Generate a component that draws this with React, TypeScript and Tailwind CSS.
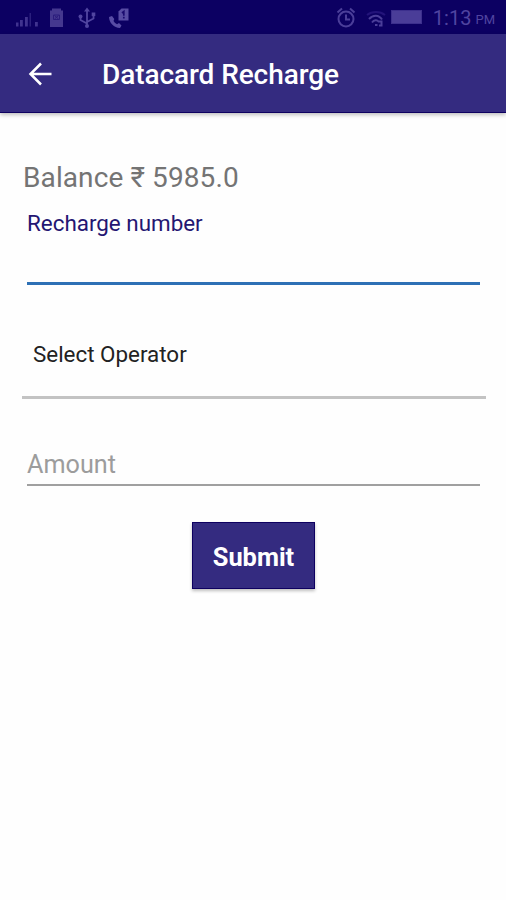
function SignalIcon() {
    return (
        <svg width="24" height="20" viewBox="0 0 24 20" fill="#40338f">
            <rect x="1" y="14.500" width="2.500" height="4" />
            <rect x="5" y="12" width="2.800" height="6.500" />
            <rect x="10" y="9" width="2.800" height="9.500" />
            <rect x="14.500" y="5" width="1.500" height="13.500" opacity="0.6" />
            <rect x="20" y="14" width="2.800" height="4.500" />
        </svg>
    );
}

function BatterySaverIcon() {
    return (
        <svg width="15" height="20" viewBox="0 0 15 20">
            <path d="M3 0.500H12V2.500H14V19H1V2.500H3Z" fill="#45388f" />
            <path d="M4.500 7h6v4.500h-6zM5.500 7.500l4 3.500M9.500 7.500l-4 3.500" fill="none" stroke="#2b1c7c" strokeWidth="1" />
        </svg>
    );
}

function UsbIcon() {
    return (
        <svg width="20" height="22" viewBox="0 0 20 22" fill="none" stroke="#5145a0" strokeWidth="1.800">
            <path d="M10 3V19M10 16.500L3.500 13V9.500M10 15L16.500 11.500V8" />
            <path d="M10 0.500L13 4.500H7Z" fill="#5145a0" stroke="none" />
            <circle cx="10" cy="19" r="2" fill="#5145a0" stroke="none" />
            <circle cx="3.500" cy="9.500" r="2" fill="#5145a0" stroke="none" />
            <rect x="14.700" y="5.500" width="3.600" height="3.600" fill="#5145a0" stroke="none" />
        </svg>
    );
}

function PhoneIcon() {
    return (
        <svg width="22" height="22" viewBox="0 0 22 22">
            <path d="M1 10L4 9L6.300 12L5.500 14C6.500 15.500 7.500 16.500 9 17.200L11 16L13.500 18.500L12 21C6 21 1 15.500 1 10Z" fill="#584ca4" />
            <path d="M13.500 1.500H20.500V13.500H10.500V4.500Z" fill="#584ca4" />
            <path d="M14 6L15.800 4.500V8.800M15.800 9.800V11.500" fill="none" stroke="#1b0b70" strokeWidth="1.700" />
        </svg>
    );
}

function AlarmIcon() {
    return (
        <svg width="20" height="21" viewBox="0 0 20 21" fill="none" stroke="#4b3e99" strokeWidth="2">
            <circle cx="10" cy="12" r="7.500" />
            <path d="M10 7.500V12.500H14M1.500 5.500L6 1.500M18.500 5.500L14 1.500" />
        </svg>
    );
}

function WifiIcon() {
    return (
        <svg width="20" height="16" viewBox="0 0 20 16" fill="none" strokeWidth="2">
            <path d="M1 4C6 0 14 0 19 4" stroke="#23137a" />
            <path d="M3 8C7 3.500 13 3.500 16 8.500" stroke="#4b3e99" />
            <path d="M6 11.500C8 9 11 8.500 12.500 10.500H15.500V14.500H13" stroke="#4b3e99" />
            <path d="M9 14H11.500" stroke="#4b3e99" />
        </svg>
    );
}

function StatusBar() {
    return (
        <div className="flex h-[34px] items-center justify-between bg-[#0c0062] pr-[11px] pl-[15px]">
            <div className="flex items-center pt-px">
                <SignalIcon />
                <span className="ml-[10px]"><BatterySaverIcon /></span>
                <span className="ml-[13px]"><UsbIcon /></span>
                <span className="ml-[11px]"><PhoneIcon /></span>
            </div>
            <div className="flex items-center">
                <AlarmIcon />
                <span className="mt-1 ml-[10px]"><WifiIcon /></span>
                <span className="ml-[5px] h-[14px] w-[31px] border border-[#3c2f8d] bg-[#4a3d98]" />
                <span className="ml-[11px] pt-[2px] text-[20px] leading-none text-[#5044a0]">1:13</span>
                <span className="mt-[5px] ml-[4px] text-[13px] leading-none text-[#5044a0]">PM</span>
            </div>
        </div>
    );
}

export default function App() {
    return (
        <div className="h-[900px] w-[506px] overflow-hidden bg-[#fefefe] font-['Roboto','Noto_Sans',sans-serif]">
            <StatusBar />

            <header className="flex h-[79px] items-center border-b border-[#0e0060] bg-[#342b80] pl-7 shadow-[0_2px_4px_rgba(0,0,0,0.25)]">
                <button aria-label="Back" className="pt-px">
                    <svg width="24" height="24" viewBox="0 0 24 24" fill="none" stroke="#ffffff" strokeWidth="2.500">
                        <path d="M23.500 12H2.500M13 1.500L2.500 12L13 22.500" />
                    </svg>
                </button>
                <h1 className="ml-[50px] pt-[4px] text-[28px] leading-8 font-medium tracking-[-0.08px] text-white">Datacard Recharge</h1>
            </header>

            <main className="flex flex-col px-[22px] pt-[49px]">
                <p className="pl-[1px] text-[28px] leading-8 tracking-[0.1px] whitespace-nowrap text-[#747474]">Balance ₹ 5985.0</p>

                <div className="mr-[4px] ml-[5px] mt-[13px] h-[78px] border-b-[3px] border-[#2d70b5]">
                    <label className="block text-[22.400px] leading-8 text-[#241672]">Recharge number</label>
                </div>

                <div className="-mr-[2px] mt-[20px] flex h-[94px] items-center border-b-[3px] border-[#c3c3c3] pt-[6px] pl-[11px]">
                    <span className="text-[22.400px] leading-8 text-[#222222]">Select Operator</span>
                </div>

                <div className="mr-[4px] ml-[5px] mt-[50px] h-[37px] border-b-2 border-[#a0a0a0]">
                    <span className="block text-[25.200px] leading-8 text-[#9c9c9c]">Amount</span>
                </div>

                <button className="mt-[36px] ml-[170px] h-[67px] w-[123px] border border-[#0e0060] bg-[#342b80] pt-[4px] text-[25.400px] font-bold text-white shadow-[0_2px_3px_rgba(0,0,0,0.25)]">
                    Submit
                </button>
            </main>
        </div>
    );
}
